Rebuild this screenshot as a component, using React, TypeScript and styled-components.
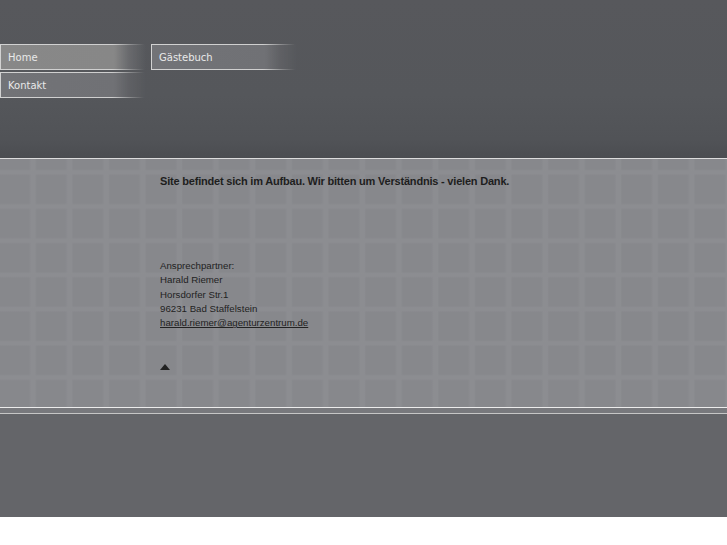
import React from "react";
import styled, { createGlobalStyle } from "styled-components";

const GlobalStyle = createGlobalStyle`
  html, body { margin: 0; padding: 0; background: #ffffff; }
  body { font-family: "Liberation Sans", Arial, sans-serif; }
  * { box-sizing: border-box; }
`;

const Page = styled.div`
  width: 100%;
  display: flex;
  flex-direction: column;
`;

const Header = styled.header`
  height: 158px;
  padding-top: 44px;
  background: linear-gradient(
    to bottom,
    #57585c 0%,
    #55575b 60%,
    #515357 88%,
    #4b4d51 100%
  );
`;

const Nav = styled.nav`
  display: grid;
  grid-template-columns: 146px 146px;
  column-gap: 5px;
  row-gap: 2px;
`;

const NavItem = styled.a<{ $active?: boolean }>`
  display: flex;
  align-items: center;
  height: 26px;
  padding-left: 7px;
  font-family: "DejaVu Sans", Verdana, sans-serif;
  font-size: 10px;
  color: #e9e9e9;
  text-decoration: none;
  border: 1px solid;
  border-right-width: 0;
  border-image: linear-gradient(
      to right,
      #d2d2d2 0%,
      #cfcfcf 76%,
      rgba(200, 200, 200, 0.35) 90%,
      rgba(200, 200, 200, 0) 98%
    )
    1;
  background: ${(p) =>
    p.$active
      ? "linear-gradient(to right, #888888 0%, #878787 78%, rgba(110,111,114,0.8) 88%, rgba(86,88,92,0) 100%)"
      : "linear-gradient(to right, #727377 0%, #707175 78%, rgba(98,99,103,0.8) 88%, rgba(85,87,91,0) 100%)"};
`;

const Content = styled.main`
  height: 249px;
  border-top: 1px solid #dcdcdc;
  padding: 15px 0 0 160px;
  background-color: #87888c;
  background-image: linear-gradient(
      to bottom,
      transparent 28px,
      #8c8d91 30px,
      #8c8d91 33px,
      transparent 34.2px
    ),
    linear-gradient(
      to right,
      transparent 29px,
      #8c8d91 31px,
      #8c8d91 35px,
      transparent 36.6px
    );
  background-size: 100% 34.2px, 36.6px 100%;
  background-position: 0 -18px, 0 0;
`;

const Notice = styled.p`
  margin: 0;
  font-size: 11px;
  line-height: 14px;
  font-weight: bold;
  color: #1e1e1e;
  letter-spacing: -0.2px;
`;

const Contact = styled.address`
  margin-top: 71px;
  font-style: normal;
  font-size: 9.7px;
  line-height: 14.3px;
  color: #222222;
  display: flex;
  flex-direction: column;
`;

const Mail = styled.a`
  color: #222222;
  text-decoration: underline;
  align-self: flex-start;
`;

const TopLink = styled.a`
  display: block;
  margin-top: 26px;
  width: 10px;
  height: 6px;
`;

const Separator = styled.div`
  height: 7px;
  border-top: 1px solid #ececec;
  border-bottom: 1px solid #c6c6c6;
  background: #78797d;
`;

const Footer = styled.footer`
  height: 103px;
  background: #646569;
`;

export default function App() {
  return (
    <>
      <GlobalStyle />
      <Page>
        <Header>
          <Nav>
            <NavItem href="#" $active>
              Home
            </NavItem>
            <NavItem href="#">Gästebuch</NavItem>
            <NavItem href="#">Kontakt</NavItem>
          </Nav>
        </Header>
        <Content>
          <Notice>
            Site befindet sich im Aufbau. Wir bitten um Verständnis - vielen Dank.
          </Notice>
          <Contact>
            <span>Ansprechpartner:</span>
            <span>Harald Riemer</span>
            <span>Horsdorfer Str.1</span>
            <span>96231 Bad Staffelstein</span>
            <Mail href="#">harald.riemer@agenturzentrum.de</Mail>
          </Contact>
          <TopLink href="#" aria-label="nach oben">
            <svg width="10" height="6" viewBox="0 0 10 6">
              <polygon points="5,0 10,6 0,6" fill="#222" />
            </svg>
          </TopLink>
        </Content>
        <Separator />
        <Footer />
      </Page>
    </>
  );
}
